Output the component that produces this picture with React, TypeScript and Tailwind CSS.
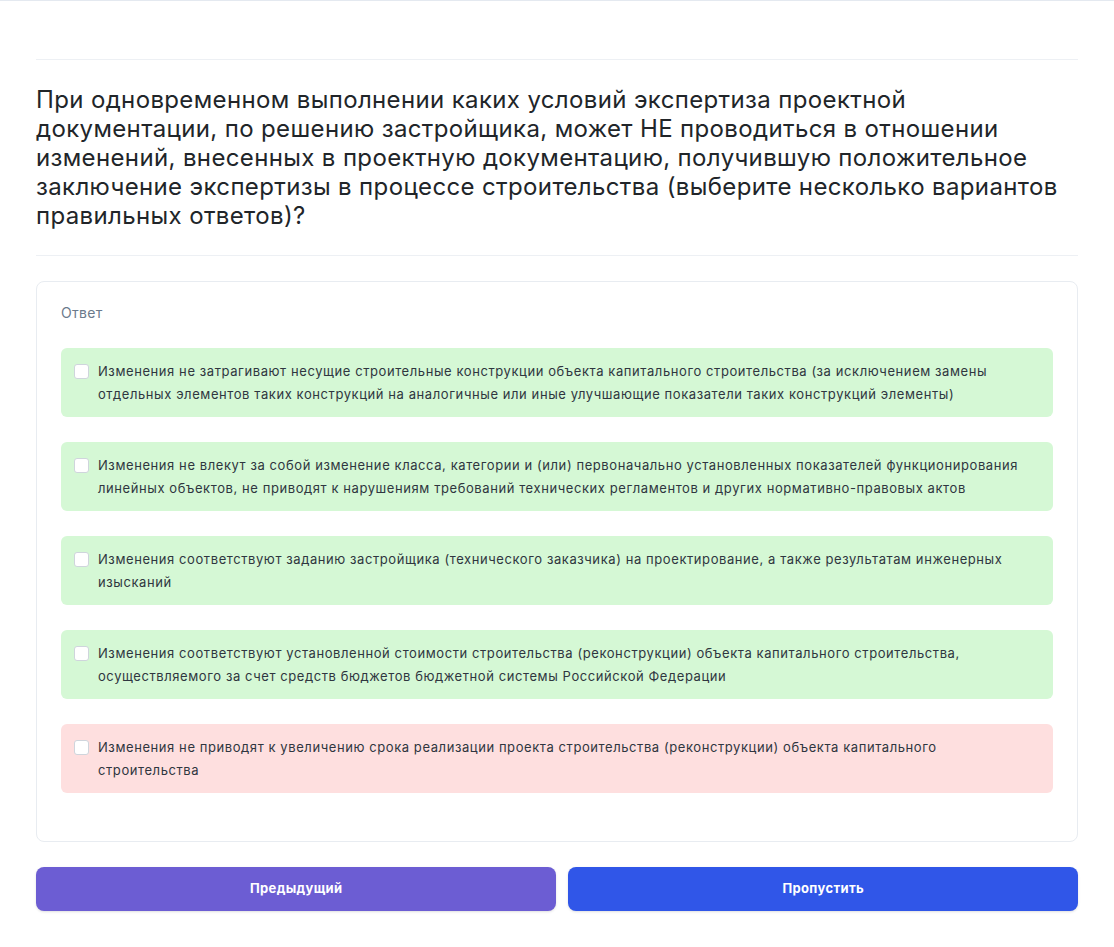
import React from 'react';

const options = [
  {
    text: 'Изменения не затрагивают несущие строительные конструкции объекта капитального строительства (за исключением замены отдельных элементов таких конструкций на аналогичные или иные улучшающие показатели таких конструкций элементы)',
    correct: true,
  },
  {
    text: 'Изменения не влекут за собой изменение класса, категории и (или) первоначально установленных показателей функционирования линейных объектов, не приводят к нарушениям требований технических регламентов и других нормативно-правовых актов',
    correct: true,
  },
  {
    text: 'Изменения соответствуют заданию застройщика (технического заказчика) на проектирование, а также результатам инженерных изысканий',
    correct: true,
  },
  {
    text: 'Изменения соответствуют установленной стоимости строительства (реконструкции) объекта капитального строительства, осуществляемого за счет средств бюджетов бюджетной системы Российской Федерации',
    correct: true,
  },
  {
    text: 'Изменения не приводят к увеличению срока реализации проекта строительства (реконструкции) объекта капитального строительства',
    correct: false,
  },
];

export default function App() {
  return (
    <div
      className="min-h-[947px] bg-white border-t border-[#e4e9f0]"
      style={{ fontFamily: 'Inter, "Noto Sans", sans-serif' }}
    >
      <div className="px-9">
        <div className="h-[59px] border-b border-[#edf0f4]" />
        <div className="pt-[25px] pb-[25px] border-b border-[#edf0f4]">
          <h1 className="text-[24px] leading-[29px] font-normal tracking-[0.36px] text-[#212529]">
            При одновременном выполнении каких условий экспертиза проектной документации, по решению
            застройщика, может НЕ проводиться в отношении изменений, внесенных в проектную
            документацию, получившую положительное заключение экспертизы в процессе строительства
            (выберите несколько вариантов правильных ответов)?
          </h1>
        </div>

        <div className="mt-[25px] rounded-lg border border-[#e8ecf1] px-6 pt-[21px] pb-12">
          <p className="text-sm leading-5 tracking-[0.3px] text-[#6b7a8b] mb-[25px]">Ответ</p>
          <div className="flex flex-col gap-[25px]">
            {options.map((o, i) => (
              <label
                key={i}
                className={
                  'flex items-start gap-[9px] rounded-md pl-[13px] pr-[26px] py-[11.5px] ' +
                  (o.correct ? 'bg-[#d5f8d5]' : 'bg-[#fedfdf]')
                }
              >
                <span className="mt-[4px] w-[15px] h-[15px] shrink-0 rounded-[3px] border border-[#cfd5dc] bg-white" />
                <span className="text-[13px] leading-[23px] tracking-[0.58px] text-[#2f3640]">
                  {o.text}
                </span>
              </label>
            ))}
          </div>
        </div>

        <div className="mt-[25px] flex gap-3">
          <button className="flex-auto h-11 rounded-lg bg-[#6c5dd3] text-white text-[13px] font-bold tracking-[0.35px] shadow-sm">
            Предыдущий
          </button>
          <button className="flex-auto h-11 rounded-lg bg-[#3056e8] text-white text-[13px] font-bold tracking-[0.35px] shadow-sm">
            Пропустить
          </button>
        </div>
      </div>
    </div>
  );
}
